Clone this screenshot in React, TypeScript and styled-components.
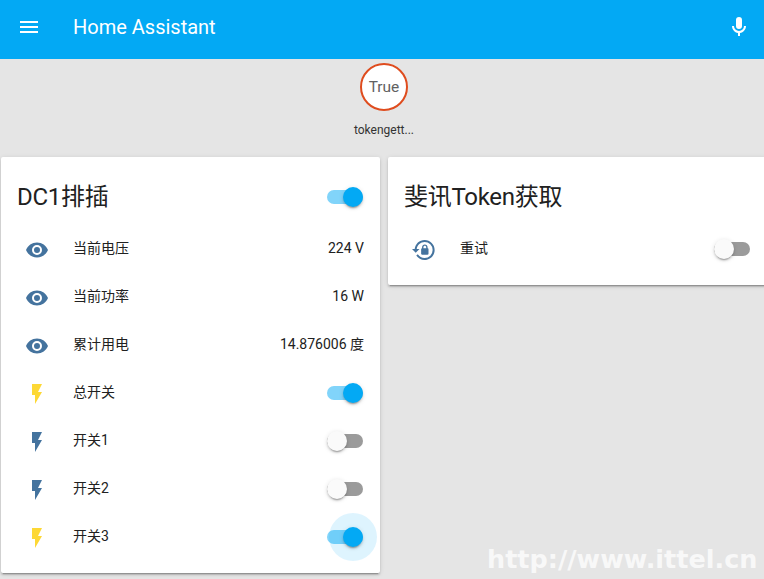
import React from "react";
import styled, { createGlobalStyle } from "styled-components";

const Global = createGlobalStyle`
  html, body { margin: 0; padding: 0; height: 100%; }
  body {
    background: #e5e5e5;
    font-family: Roboto, "Noto Sans CJK SC", sans-serif;
    color: #212121;
    overflow: hidden;
  }
`;

const Page = styled.div`
  position: relative;
  width: 764px;
  height: 579px;
  overflow: hidden;
  background: #e5e5e5;
`;

const Toolbar = styled.header`
  height: 59px;
  background: #03a9f4;
  color: #fff;
  display: flex;
  align-items: center;
  padding: 0 13px 5px 17px;
  box-sizing: border-box;
`;

const ToolbarTitle = styled.div`
  flex: 1;
  font-size: 20px;
  font-weight: 400;
  margin-left: 32px;
  line-height: 28px;
`;

const Badges = styled.section`
  height: 98px;
  display: flex;
  justify-content: center;
  padding: 4px 0 0 4px;
  box-sizing: border-box;
`;

const Badge = styled.div`
  width: 64px;
  display: flex;
  flex-direction: column;
  align-items: center;
`;

const BadgeCircle = styled.div`
  width: 48px;
  height: 48px;
  box-sizing: border-box;
  border: 2px solid #df4c1e;
  border-radius: 50%;
  background: #fff;
  color: #616161;
  font-size: 15.5px;
  display: flex;
  align-items: center;
  justify-content: center;
`;

const BadgeLabel = styled.div`
  margin-top: 12px;
  font-size: 12px;
  line-height: 14px;
  color: #333;
  white-space: nowrap;
`;

const Columns = styled.main`
  display: grid;
  grid-template-columns: 379px 379px;
  column-gap: 8px;
  padding-left: 1px;
  align-items: start;
`;

const Card = styled.article`
  background: #fff;
  border-radius: 2px;
  box-shadow: 0 2px 2px rgba(0, 0, 0, 0.14), 0 1px 5px rgba(0, 0, 0, 0.12), 0 3px 1px -2px rgba(0, 0, 0, 0.2);
  padding: 0 16px 13px;
`;

const CardHeader = styled.div`
  height: 67px;
  display: flex;
  align-items: center;
  justify-content: space-between;
  padding-top: 13px;
  box-sizing: border-box;
`;

const CardTitle = styled.h2`
  margin: 0;
  font-size: 24px;
  font-weight: 400;
  line-height: 32px;
  letter-spacing: -0.012em;
  color: #212121;
`;

const Row = styled.div`
  height: 48px;
  display: flex;
  align-items: center;
`;

const IconBox = styled.div<{ $color: string }>`
  width: 40px;
  height: 40px;
  box-sizing: border-box;
  padding-top: 4px;
  display: flex;
  align-items: center;
  justify-content: center;
  color: ${(p) => p.$color};
  flex: none;
`;

const RowName = styled.div`
  flex: 1;
  margin-left: 16px;
  font-size: 14px;
  line-height: 20px;
  color: #212121;
`;

const RowValue = styled.div`
  font-size: 14px;
  line-height: 20px;
  color: #212121;
`;

const Toggle = styled.div<{ $on: boolean }>`
  position: relative;
  width: 36px;
  height: 14px;
  margin-right: 1px;
  border-radius: 7px;
  background: ${(p) => (p.$on ? "#81d4fa" : "#9b9b9b")};
  flex: none;
`;

const RowToggle = styled.div`
  padding-top: 2px;
  flex: none;
`;

const Thumb = styled.div<{ $on: boolean }>`
  position: absolute;
  top: -3px;
  left: ${(p) => (p.$on ? "16px" : "0")};
  width: 20px;
  height: 20px;
  border-radius: 50%;
  background: ${(p) => (p.$on ? "#03a9f4" : "#fafafa")};
  box-shadow: 0 2px 2px rgba(0, 0, 0, 0.14), 0 1px 5px rgba(0, 0, 0, 0.12), 0 3px 1px -2px rgba(0, 0, 0, 0.2);
`;

const Ripple = styled.div`
  position: absolute;
  top: -17px;
  left: 2px;
  width: 48px;
  height: 48px;
  border-radius: 50%;
  background: rgba(3, 169, 244, 0.13);
`;

const Watermark = styled.div`
  position: absolute;
  left: 487px;
  top: 542px;
  font-family: "DejaVu Sans", sans-serif;
  font-weight: 700;
  font-size: 25.5px;
  line-height: 34px;
  color: rgba(255, 255, 255, 0.75);
  white-space: nowrap;
`;

const paths = {
  menu: "M3,6H21V8H3V6M3,11H21V13H3V11M3,16H21V18H3V16Z",
  mic: "M12,2A3,3 0 0,1 15,5V11A3,3 0 0,1 12,14A3,3 0 0,1 9,11V5A3,3 0 0,1 12,2M19,11C19,14.53 16.39,17.44 13,17.93V21H11V17.93C7.61,17.44 5,14.53 5,11H7A5,5 0 0,0 12,16A5,5 0 0,0 17,11H19Z",
  eye: "M12,9A3,3 0 0,0 9,12A3,3 0 0,0 12,15A3,3 0 0,0 15,12A3,3 0 0,0 12,9M12,17A5,5 0 0,1 7,12A5,5 0 0,1 12,7A5,5 0 0,1 17,12A5,5 0 0,1 12,17M12,4.5C7,4.5 2.73,7.61 1,12C2.73,16.39 7,19.5 12,19.5C17,19.5 21.27,16.39 23,12C21.27,7.61 17,4.5 12,4.5Z",
  flash: "M7,2V13H10V22L17,10H13L17,2H7Z",
  lockReset:
    "M12.63,2C18.16,2 22.64,6.5 22.64,12C22.64,17.5 18.16,22 12.63,22C9.12,22 6.05,20.18 4.26,17.43L5.84,16.18C7.25,18.47 9.76,20 12.64,20A8,8 0 0,0 20.64,12A8,8 0 0,0 12.64,4C8.56,4 5.2,7.06 4.71,11H7.47L3.73,14.73L0,11H2.69C3.19,5.95 7.45,2 12.63,2M15.59,10.24C16.09,10.25 16.5,10.65 16.5,11.16V15.77C16.5,16.27 16.09,16.69 15.59,16.69H10.05C9.54,16.69 9.13,16.27 9.13,15.77V11.16C9.13,10.65 9.54,10.25 10.05,10.24V9.23C10.05,7.7 11.29,6.46 12.82,6.46C14.35,6.46 15.59,7.7 15.59,9.23V10.24M12.82,7.86C12.06,7.86 11.44,8.47 11.44,9.23V10.24H14.2V9.23C14.2,8.47 13.58,7.86 12.82,7.86Z",
};

const Icon = ({ d }: { d: string }) => (
  <svg width="24" height="24" viewBox="0 0 24 24" fill="currentColor">
    <path d={d} />
  </svg>
);

const BLUE = "#44739e";
const YELLOW = "#fdd835";

const Switch = ({ on, ripple }: { on: boolean; ripple?: boolean }) => (
  <Toggle $on={on}>
    {ripple && <Ripple />}
    <Thumb $on={on} />
  </Toggle>
);

type RowData = { d: string; color: string; name: string; value?: string; on?: boolean; ripple?: boolean };

const rows: RowData[] = [
  { d: paths.eye, color: BLUE, name: "当前电压", value: "224 V" },
  { d: paths.eye, color: BLUE, name: "当前功率", value: "16 W" },
  { d: paths.eye, color: BLUE, name: "累计用电", value: "14.876006 度" },
  { d: paths.flash, color: YELLOW, name: "总开关", on: true },
  { d: paths.flash, color: BLUE, name: "开关1", on: false },
  { d: paths.flash, color: BLUE, name: "开关2", on: false },
  { d: paths.flash, color: YELLOW, name: "开关3", on: true, ripple: true },
];

const EntityRow = ({ d, color, name, value, on, ripple }: RowData) => (
  <Row>
    <IconBox $color={color}>
      <Icon d={d} />
    </IconBox>
    <RowName>{name}</RowName>
    {value !== undefined ? (
      <RowValue>{value}</RowValue>
    ) : (
      <RowToggle>
        <Switch on={!!on} ripple={ripple} />
      </RowToggle>
    )}
  </Row>
);

export default function App() {
  return (
    <Page>
      <Global />
      <Toolbar>
        <Icon d={paths.menu} />
        <ToolbarTitle>Home Assistant</ToolbarTitle>
        <Icon d={paths.mic} />
      </Toolbar>
      <Badges>
        <Badge>
          <BadgeCircle>True</BadgeCircle>
          <BadgeLabel>tokengett...</BadgeLabel>
        </Badge>
      </Badges>
      <Columns>
        <Card>
          <CardHeader>
            <CardTitle>DC1排插</CardTitle>
            <Switch on />
          </CardHeader>
          {rows.map((r) => (
            <EntityRow key={r.name} {...r} />
          ))}
        </Card>
        <Card>
          <CardHeader>
            <CardTitle>斐讯Token获取</CardTitle>
          </CardHeader>
          <EntityRow d={paths.lockReset} color={BLUE} name="重试" on={false} />
        </Card>
      </Columns>
      <Watermark>http://www.ittel.cn</Watermark>
    </Page>
  );
}
